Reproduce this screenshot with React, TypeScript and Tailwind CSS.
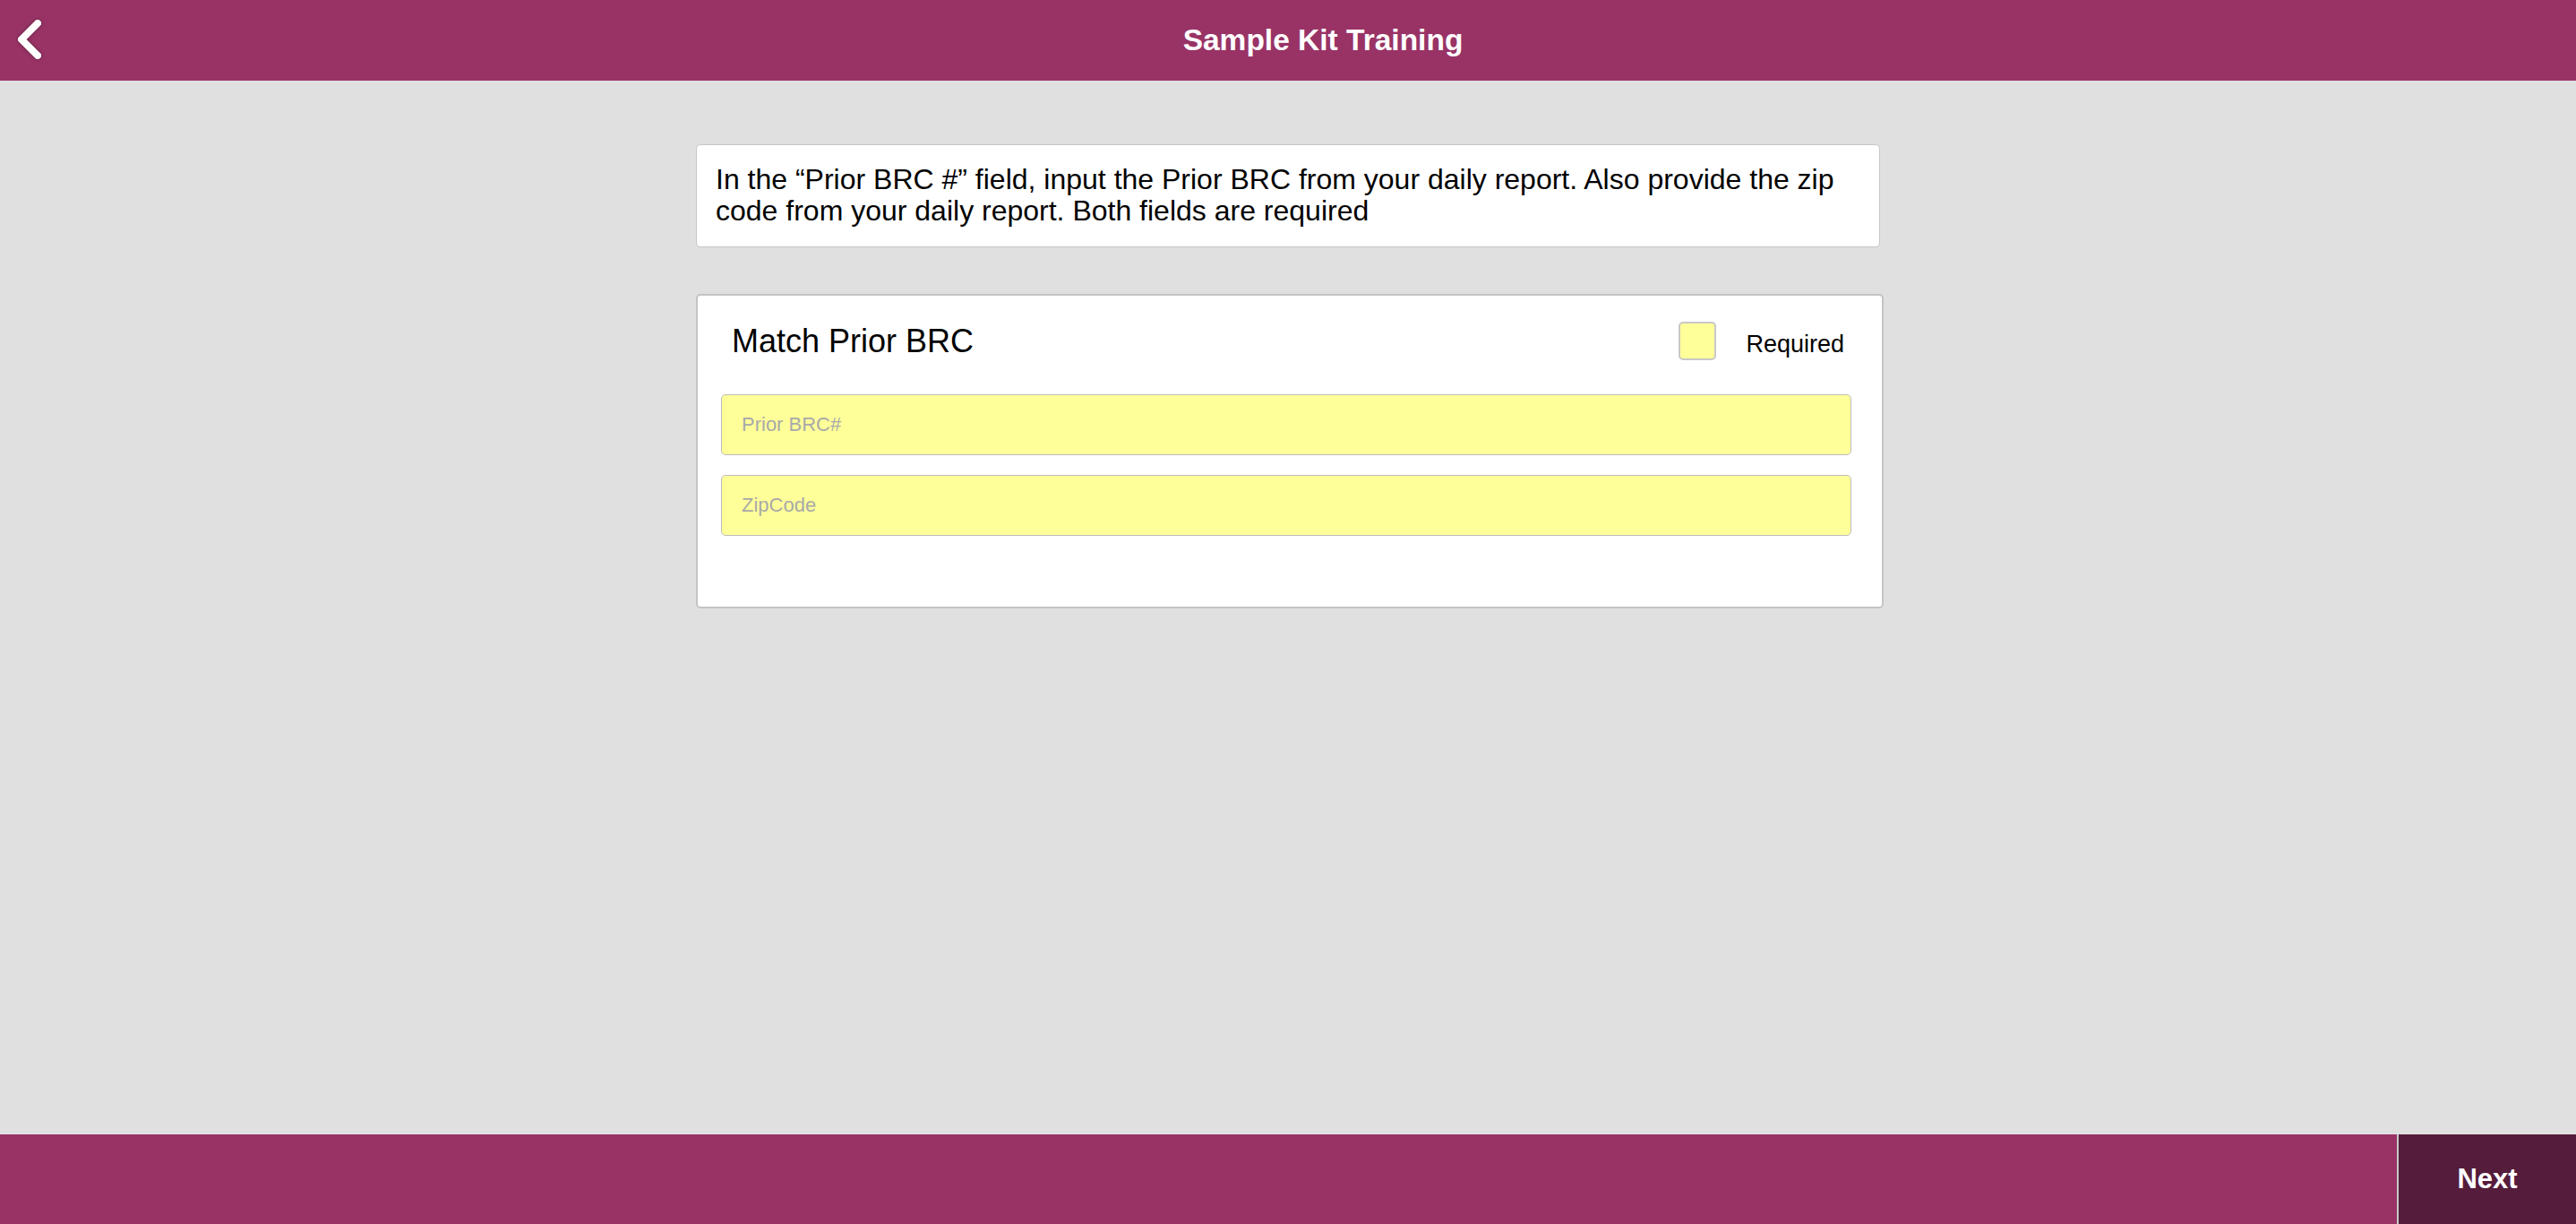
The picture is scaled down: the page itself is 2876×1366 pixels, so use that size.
import React, { useState } from 'react';

const BackChevron: React.FC = () => (
  <svg width="42" height="58" viewBox="0 0 42 58" className="drop-shadow-[0_0_2px_rgba(0,0,0,0.35)]">
    <polyline
      points="26,7 8,25 26,43"
      fill="none"
      stroke="#ffffff"
      strokeWidth="8"
      strokeLinecap="round"
      strokeLinejoin="round"
      transform="translate(2,4)"
    />
  </svg>
);

const App: React.FC = () => {
  const [priorBrc, setPriorBrc] = useState('');
  const [zipCode, setZipCode] = useState('');

  return (
    <div className="flex h-[1366px] flex-col bg-[#e0e0e0] font-['Liberation_Sans',Arial,sans-serif]">
      {/* Top bar */}
      <header className="relative flex h-[90px] shrink-0 items-center bg-[#993366]">
        <button className="absolute left-[14px] top-[15px] flex items-center">
          <BackChevron />
        </button>
        <h1 className="flex-1 pl-[78px] text-center text-[33.5px] font-bold text-white">Sample Kit Training</h1>
      </header>

      {/* Body */}
      <main className="flex-1 pl-[4px]">
        <div className="mx-auto flex w-[1326px] flex-col pt-[71px]">
          <div className="w-[1322px] rounded-[5px] border border-[#c6c6c6] bg-white px-[21px] pt-[21px] pb-[22px] text-[32px] leading-[35px] text-black">
            In the “Prior BRC #” field, input the Prior BRC from your daily report. Also provide the zip code from your
            daily report. Both fields are required
          </div>

          <div className="mt-[52px] rounded-[5px] border-2 border-[#c4c4c4] bg-white pb-[79px]">
            <div className="mt-[29px] flex h-[43px] items-center pl-[38px] pr-[42px]">
              <h2 className="flex-1 text-[36px] leading-none text-black">Match Prior BRC</h2>
              <div className="h-[43px] w-[42px] rounded-[5px] border-2 border-[#c8c8c8] bg-[#ffff99]" />
              <span className="ml-[33px] mt-[7px] text-[27px] leading-none text-black">Required</span>
            </div>

            <div className="ml-[26px] mt-[38px] flex w-[1262px] flex-col gap-[22px]">
              <input
                value={priorBrc}
                onChange={(e) => setPriorBrc(e.target.value)}
                placeholder="Prior BRC#"
                className="h-[68px] rounded-[5px] border border-[#bdbdbd] bg-[#ffff99] px-[22px] text-[22px] text-black outline-none placeholder:text-[#a9a9a9]"
              />
              <input
                value={zipCode}
                onChange={(e) => setZipCode(e.target.value)}
                placeholder="ZipCode"
                className="h-[68px] rounded-[5px] border border-[#bdbdbd] bg-[#ffff99] px-[22px] text-[22px] text-black outline-none placeholder:text-[#a9a9a9]"
              />
            </div>
          </div>
        </div>
      </main>

      {/* Bottom bar */}
      <footer className="flex h-[100px] shrink-0 justify-end bg-[#993366]">
        <button className="w-[200px] border-l-2 border-[#c9c9c9] bg-[#551c3b] text-[31px] font-bold text-white">
          Next
        </button>
      </footer>
    </div>
  );
};

export default App;
